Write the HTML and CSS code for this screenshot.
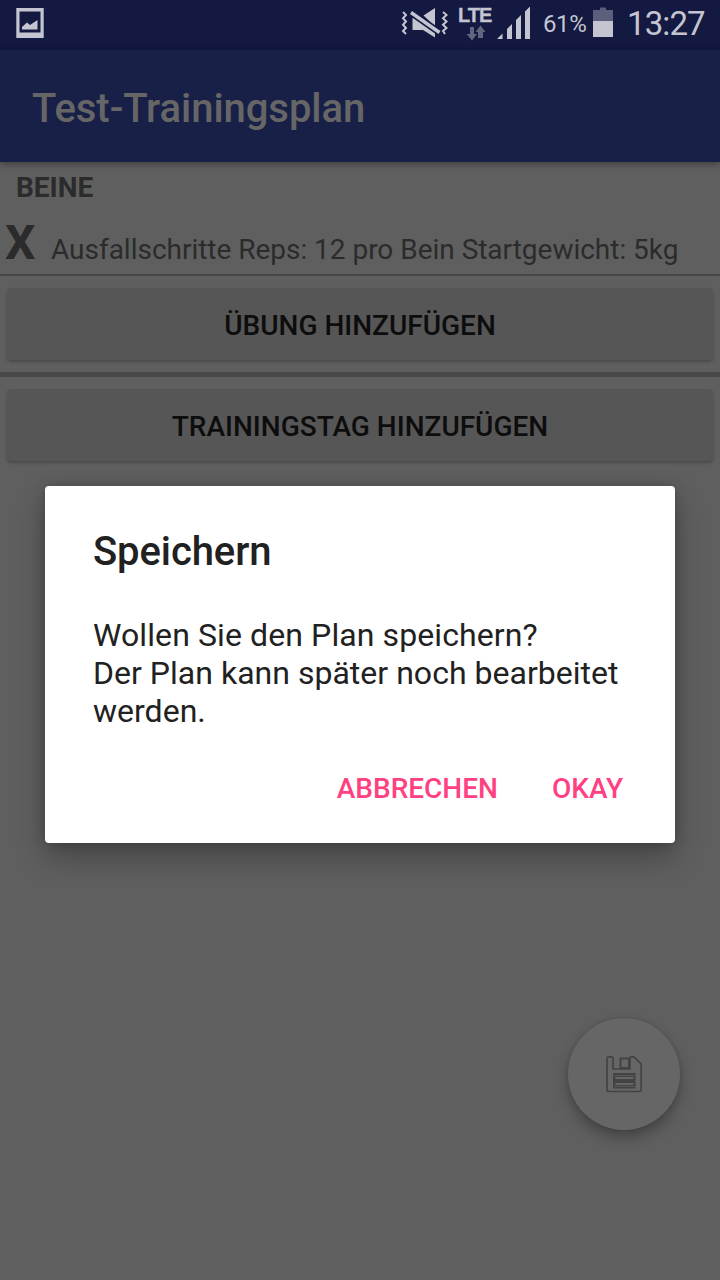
FILE: index.html
```html
<!DOCTYPE html>
<html lang="de">
<head>
<meta charset="utf-8">
<title>Test-Trainingsplan</title>
<link rel="stylesheet" href="styles.css">
</head>
<body>
<div class="screen">
  <header class="status">
    <svg class="status-picture" width="28" height="50" viewBox="16 0 28 50">
      <path fill-rule="evenodd" d="M16.300 8h27.400v30H16.300zM19.500 11.500v21h21v-21z"/>
      <path d="M22 29.500v-2.500l5-4.500 3 2.500 7.500-5v9.500z"/>
    </svg>
    <svg class="status-mute" width="50" height="50" viewBox="400 0 50 50">
      <path d="M412.500 18h5L435 31v6.500L423 30h-10.500zM423.500 15.500L435 8v18.500z"/>
      <path class="zigzag" d="M403 12l3 3-3 3.300 3 3.200-3 3.200 3 3.300-3 3 3 3M443 12l3.500 3-3.500 3.300 3.500 3.200-3.500 3.200 3.500 3.300-3.500 3 2 3"/>
      <path class="slash-gap" d="M411 12.500l28.500 20"/>
      <path class="slash" d="M411 12.500l28.500 20"/>
    </svg>
    <div class="network">
      <span class="lte">LTE</span>
      <svg class="traffic" width="20" height="16" viewBox="466 25 20 16">
        <path d="M470 27h4v7h3l-5 6.500-5.500-6.500h3.500zM478 38v-6h-2.500l5-6.500 5 6.500H483v6z"/>
      </svg>
    </div>
    <svg class="signal" width="34" height="50" viewBox="497 0 34 50">
      <path d="M497 39l5.500-5.500V39zM507 39V29l5-5v15zM516 39V20l5-5v24zM525 39V11.500l5-5V39z"/>
    </svg>
    <span class="percent">61%</span>
    <svg class="battery" width="20" height="50" viewBox="593 0 20 50">
      <path class="battery-empty" d="M593 10h7V7.500h6V10h7v11h-20z"/>
      <path d="M593 21h20v16h-20z"/>
    </svg>
    <span class="clock">13:27</span>
  </header>
  <div class="appbar"><h1 class="app-title">Test-Trainingsplan</h1></div>
  <main class="content">
    <h2 class="day">BEINE</h2>
    <div class="exercise">
      <span class="remove">X</span>
      <span class="exercise-name">Ausfallschritte Reps: 12 pro Bein Startgewicht: 5kg</span>
    </div>
    <button class="wide">ÜBUNG HINZUFÜGEN</button>
    <div class="divider"></div>
    <button class="wide">TRAININGSTAG HINZUFÜGEN</button>
  </main>
  <button class="fab" aria-label="Speichern">
    <svg width="38" height="38" viewBox="605 1055 38 38">
      <path class="disk" d="M608.500 1056.800h3.200q1.300 0 1.300 1.300v10.900h17V1058.100q0-1.300 1.300-1.300h2.700l7.200 7.200v26q0 1.500-1.500 1.500h-31.200q-1.500 0-1.500-1.500v-31.700q0-1.500 1.500-1.500z"/>
      <path class="disk door" d="M620.500 1068v-9.500h8.500v9.500z"/>
      <path class="label" d="M613 1073h22.500v15.500H613z"/>
      <path class="line" d="M615.500 1078h18M615.500 1084h18"/>
      <path class="hairline" d="M614.500 1075.500h20M614.500 1086.500h20"/>
    </svg>
  </button>
  <section class="dialog">
    <h2 class="dialog-title">Speichern</h2>
    <p class="message"><span class="question">Wollen Sie den Plan speichern?</span><br>Der Plan kann später noch bearbeitet werden.</p>
    <div class="actions">
      <button class="action">ABBRECHEN</button>
      <button class="action">OKAY</button>
    </div>
  </section>
</div>
</body>
</html>
```
FILE: styles.css
```css
* { box-sizing: border-box; }
body { margin: 0; font-family: Roboto, sans-serif; }
h1, h2, p { margin: 0; }
button { border: 0; padding: 0; font: inherit; }
svg { display: block; flex: none; }

.screen {
  position: relative;
  width: 720px;
  height: 1280px;
  overflow: hidden;
  background: #5f5f5f;
}

.status {
  display: flex;
  align-items: flex-start;
  height: 50px;
  padding-left: 16px;
  background: #131940;
  color: #c4c5d0;
  fill: #c4c5d0;
  white-space: nowrap;
}
.status-mute { margin-left: 356px; }
.zigzag { fill: none; stroke: #c4c5d0; stroke-width: 2; }
.slash-gap { stroke: #131940; stroke-width: 7; }
.slash { stroke: #c4c5d0; stroke-width: 3.4; }
.network { width: 34px; margin-left: 8px; padding-top: 4px; }
.lte {
  display: block;
  height: 21px;
  font: bold 20px/23px "Liberation Sans", sans-serif;
  letter-spacing: -1px;
  -webkit-text-stroke: .3px #c4c5d0;
}
.traffic { margin-left: 8px; fill: #62657f; }
.signal { margin-left: 5px; }
.percent { width: 50px; margin-left: 12px; font-size: 24px; line-height: 28px; padding-top: 10px; letter-spacing: -.4px; }
.battery-empty { fill: #5c5f7b; }
.clock { margin-left: 14px; font-size: 33px; line-height: 38px; padding-top: 5px; letter-spacing: -.9px; }

.appbar {
  position: relative;
  display: flex;
  align-items: center;
  height: 112px;
  padding: 6px 32px 0;
  background: #192048;
  box-shadow: 0 2px 7px rgba(0, 0, 0, .35);
}
.app-title { font-size: 40px; line-height: 46px; font-weight: 500; color: #666; letter-spacing: -.05px; }

.content { padding-top: 9px; color: #2b2b2b; }
.day { padding-left: 16px; font-size: 28px; line-height: 33px; font-weight: 700; }
.exercise {
  display: flex;
  align-items: baseline;
  height: 72px;
  padding: 11px 0 0 5px;
  border-bottom: 2px solid #484848;
  white-space: nowrap;
}
.remove { width: 46px; font-size: 48px; line-height: 56px; font-weight: 700; }
.exercise-name { font-size: 28px; line-height: 33px; letter-spacing: -.02px; }
.wide {
  display: block;
  width: 706px;
  height: 72px;
  margin: 12px 7px;
  padding-top: 3px;
  border-radius: 4px;
  background: #565656;
  box-shadow: 0 2px 3px rgba(0, 0, 0, .22);
  color: #0d0d0d;
  font-size: 28px;
  font-weight: 500;
}
.divider { height: 5px; background: #484848; }

.fab {
  position: absolute;
  left: 568px;
  top: 1018px;
  display: flex;
  align-items: center;
  justify-content: center;
  width: 112px;
  height: 112px;
  border-radius: 50%;
  background: #666;
  box-shadow: 0 8px 14px rgba(0, 0, 0, .28), 0 0 4px rgba(0, 0, 0, .12);
}
.disk { fill: none; stroke: #434343; stroke-width: 1.7; }
.door { stroke-width: 2; }
.label { fill: #434343; }
.line { stroke: #666; stroke-width: 2; }
.hairline { stroke: #5a5a5a; stroke-width: 1; }

.dialog {
  position: absolute;
  left: 45px;
  top: 486px;
  width: 630px;
  height: 357px;
  padding: 43px 48px 0;
  border-radius: 4px;
  background: #fff;
  box-shadow: 0 14px 30px rgba(0, 0, 0, .28), 0 0 12px rgba(0, 0, 0, .18);
  color: #212121;
}
.dialog-title { font-size: 40px; line-height: 46px; font-weight: 500; letter-spacing: -.1px; }
.message { margin-top: 41px; font-size: 32px; line-height: 38px; letter-spacing: .02px; }
.question { letter-spacing: .1px; }
.actions { display: flex; justify-content: flex-end; gap: 54px; margin: 42px 4px 0 0; }
.action { background: none; color: #ff4081; font-size: 28px; line-height: 33px; font-weight: 500; }
```
